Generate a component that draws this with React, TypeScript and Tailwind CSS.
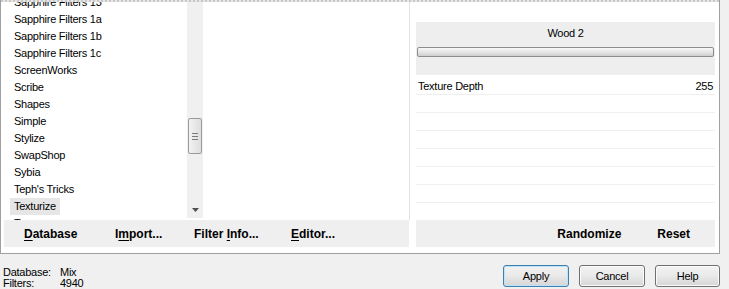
import React from "react";

const items = [
  "Sapphire Filters 13",
  "Sapphire Filters 1a",
  "Sapphire Filters 1b",
  "Sapphire Filters 1c",
  "ScreenWorks",
  "Scribe",
  "Shapes",
  "Simple",
  "Stylize",
  "SwapShop",
  "Sybia",
  "Teph's Tricks",
  "Texturize",
  "Tramages",
];

function Btn({ label, primary }: { label: string; primary?: boolean }) {
  return (
    <div
      className={
        "h-[22px] flex items-center justify-center rounded-[3px] border bg-linear-to-b from-[#f3f3f3] via-[#e9e9e9] to-[#d5d5d5] text-[11px] text-black " +
        (primary
          ? "border-[#3c7fb1] shadow-[inset_0_0_0_1px_#bfe3f7]"
          : "border-[#707070] shadow-[inset_0_0_0_1px_#fbfbfb]")
      }
      style={{ width: label === "Help" ? 65 : 66 }}
    >
      {label}
    </div>
  );
}

export default function App() {
  return (
    <div
      className="w-[729px] h-[289px] bg-[#f0f0f0] overflow-hidden text-black tracking-[-0.25px]"
      style={{ fontFamily: '"Liberation Sans", Arial, sans-serif' }}
    >
      {/* main panel */}
      <div className="w-[720px] h-[254px] bg-white border-l border-r border-b border-[#a0a0a0] flex flex-col">
        <div className="h-[2px] w-full bg-[repeating-linear-gradient(90deg,#c8c8c8_0px,#c8c8c8_2px,#e6e6e6_2px,#e6e6e6_4px)]" />
        <div className="flex h-[251px]">
          {/* left section */}
          <div className="w-[409px] flex flex-col">
            <div className="h-[218px] flex">
              {/* list */}
              <div className="w-[186px] overflow-hidden">
                <div className="mt-[-8px]">
                  {items.map((it) => (
                    <div key={it} className="h-[17px] flex items-center pl-[9px]">
                      <span
                        className={
                          "text-[11px] leading-[17px] px-[4px] " +
                          (it === "Texturize" ? "bg-[#e6e6e6]" : "")
                        }
                      >
                        {it}
                      </span>
                    </div>
                  ))}
                </div>
              </div>
              {/* scrollbar */}
              <div className="w-[16px] h-[216px] bg-[#f0f0f0] flex flex-col items-center">
                <div className="mt-[116px] w-[14px] h-[36px] rounded-[2px] border border-[#9a9a9a] bg-linear-to-r from-[#f2f2f2] to-[#dedede] flex flex-col items-center justify-center gap-[2px]">
                  <div className="w-[6px] h-px bg-[#7a7a7a]" />
                  <div className="w-[6px] h-px bg-[#7a7a7a]" />
                  <div className="w-[6px] h-px bg-[#7a7a7a]" />
                </div>
                <svg width="7" height="4" viewBox="0 0 7 4" className="mt-[54px]">
                  <path d="M0 0 L7 0 L3.5 4 Z" fill="#505050" />
                </svg>
              </div>
              {/* middle panel */}
              <div className="flex-1 border-r border-[#e2e2e2]" />
            </div>
            {/* bottom bar left */}
            <div className="ml-[3px] mr-[1px] h-[27px] bg-[#efefef] flex items-center font-bold text-[12px] tracking-normal">
              <div className="w-[111px] pl-[20px]">
                <span className="underline underline-offset-2">D</span>atabase
              </div>
              <div className="w-[79px]">
                I<span className="underline underline-offset-2">m</span>port...
              </div>
              <div className="w-[97px]">
                Filter <span className="underline underline-offset-2">I</span>nfo...
              </div>
              <div>
                <span className="underline underline-offset-2">E</span>ditor...
              </div>
            </div>
          </div>
          {/* right section */}
          <div className="ml-[6px] w-[299px] flex flex-col">
            <div className="mt-[20px] h-[53px] bg-[#eeeeee] flex flex-col">
              <div className="pt-[4px] h-[25px] text-center text-[11px] leading-[14px]">Wood 2</div>
              <div className="mx-[1px] h-[10px] rounded-[2px] border border-[#8c8c8c] bg-linear-to-b from-[#f8f8f8] via-[#e6e6e6] to-[#cfcfcf]" />
            </div>
            <div className="h-[20px] pt-[3px] border-b border-[#efefef] flex items-center justify-between px-[2px] text-[11px]">
              <span>Texture Depth</span>
              <span>255</span>
            </div>
            {[0, 1, 2, 3, 4, 5].map((i) => (
              <div key={i} className="h-[18px] border-b border-[#efefef]" />
            ))}
            <div className="mt-[17px] h-[27px] bg-[#efefef] flex items-center justify-end pr-[25px] font-bold text-[12px] tracking-normal">
              <span className="mr-[36px]">Randomize</span>
              <span>Reset</span>
            </div>
          </div>
        </div>
      </div>
      {/* status + buttons */}
      <div className="flex h-[35px]">
        <div className="pl-[3px] pt-[13px] text-[11px] leading-[11px] grid grid-cols-[57px_auto]">
          <span>Database:</span>
          <span>Mix</span>
          <span>Filters:</span>
          <span>4940</span>
        </div>
        <div className="ml-auto mr-[9px] mt-[11px] flex gap-[10px] h-[22px]">
          <Btn label="Apply" primary />
          <Btn label="Cancel" />
          <Btn label="Help" />
        </div>
      </div>
    </div>
  );
}
